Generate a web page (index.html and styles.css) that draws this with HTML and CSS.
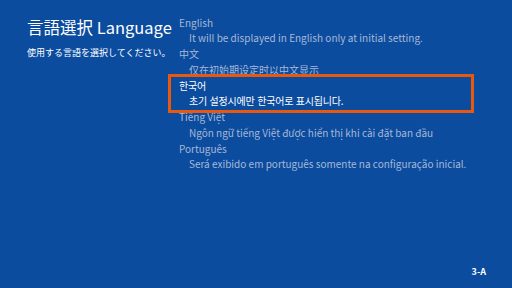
FILE: index.html
```html
<!DOCTYPE html>
<html lang="ja">
<head>
    <meta charset="UTF-8">
    <meta name="viewport" content="width=device-width, initial-scale=1.0">
    <title>言語選択 Language</title>
    <link rel="stylesheet" href="styles.css">
</head>
<body>
    <div class="screen">
        <div class="main">
            <div class="intro">
                <h1>言語選択 Language</h1>
                <p>使用する言語を選択してください。</p>
            </div>
            <ul class="languages">
                <li class="lang">
                    <div class="name">English</div>
                    <div class="desc">It will be displayed in English only at initial setting.</div>
                </li>
                <li class="lang" lang="zh-CN">
                    <div class="name">中文</div>
                    <div class="desc">仅在初始期设定时以中文显示</div>
                </li>
                <li class="lang selected korean" lang="ko">
                    <div class="name">한국어</div>
                    <div class="desc">초기 설정시에만 한국어로 표시됩니다.</div>
                </li>
                <li class="lang" lang="vi">
                    <div class="name">Tiếng Việt</div>
                    <div class="desc">Ngôn ngữ tiếng Việt được hiển thị khi cài đặt ban đầu</div>
                </li>
                <li class="lang" lang="pt">
                    <div class="name">Português</div>
                    <div class="desc">Será exibido em português somente na configuração inicial.</div>
                </li>
            </ul>
        </div>
        <div class="footer">3-A</div>
    </div>
</body>
</html>
```

FILE: styles.css
```css
body {
    margin: 0;
    padding: 0;
    background-color: #0b4c9f;
    color: #ffffff;
    font-family: "Noto Sans CJK JP", "Noto Sans", sans-serif;
}
.screen {
    display: flex;
    flex-direction: column;
    height: 288px;
}
.main {
    display: flex;
}
.intro {
    flex: 0 0 145px;
    padding: 14.5px 0 0 27px;
}
.intro h1 {
    margin: 0;
    font-size: 16.5px;
    font-weight: normal;
    line-height: 24px;
    white-space: nowrap;
}
.intro p {
    margin: 7.5px 0 0;
    font-size: 9px;
    line-height: 14px;
    white-space: nowrap;
}
.languages {
    list-style: none;
    margin: 0;
    padding: 14.5px 0 0;
    width: 298px;
}
.lang {
    padding-left: 7px;
    font-size: 10px;
    line-height: 15.75px;
    color: #a7b8d6;
    white-space: nowrap;
}
.lang .desc {
    padding-left: 10px;
}
.lang.korean {
    letter-spacing: -0.2px;
}
.lang.selected {
    color: #ffffff;
    outline: 3px solid #e8590f;
    outline-offset: 1px;
}
.footer {
    margin-top: auto;
    padding: 0 26px 10px;
    text-align: right;
    font-size: 9px;
    font-weight: bold;
    line-height: 12px;
}
```
